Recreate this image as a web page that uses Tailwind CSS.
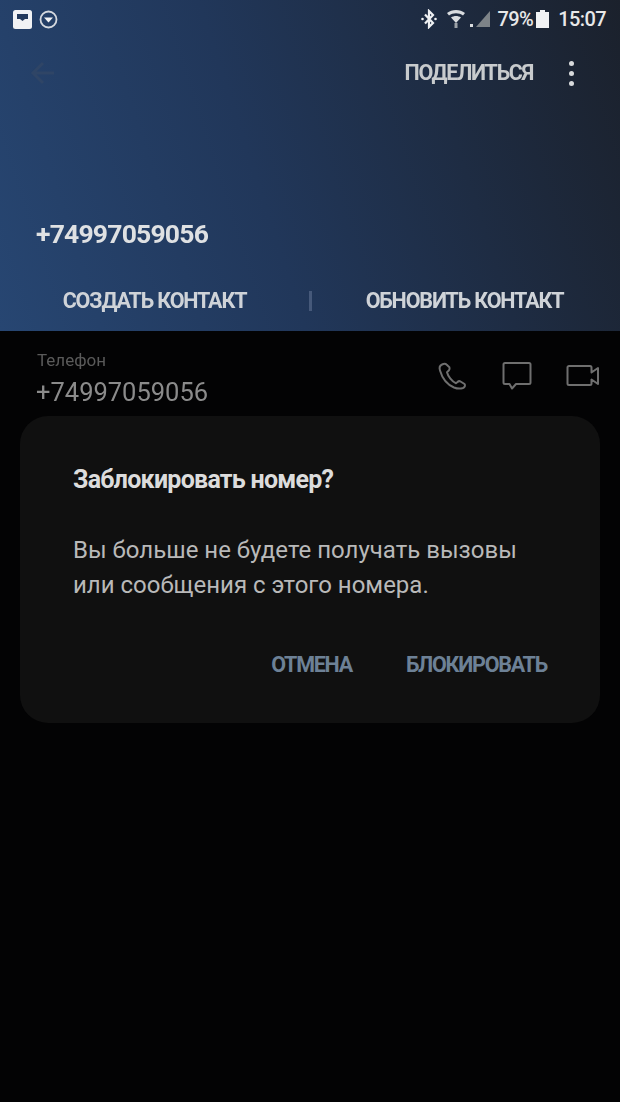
<!DOCTYPE html>
<html lang="ru">
<head>
  <meta charset="UTF-8">
  <meta name="viewport" content="width=device-width, initial-scale=1.0">
  <title>Заблокировать номер</title>
  <script src="https://cdn.jsdelivr.net/npm/@tailwindcss/browser@4"></script>
</head>
<body class="bg-[#030304] font-['Roboto',sans-serif] overflow-hidden">
  <div class="relative w-[620px] h-[1102px] overflow-hidden blur-[0.6px]">
    <!-- Contact header -->
    <header class="h-[331px] flex flex-col bg-[linear-gradient(72deg,#274672_0%,#21375a_42%,#1b212c_100%)]">
      <!-- Status bar -->
      <div class="h-[38px] pl-[13px] pr-[14px] flex items-center justify-between text-[#e8e8e8]">
        <div class="flex items-center gap-[7px]">
          <svg width="19" height="19" viewBox="0 0 19 19"><rect width="19" height="19" rx="2.500" fill="#f1f2f4"/><path d="M4 4h11v5h-3l-2.500 2L7 9H4z" fill="#23395c"/></svg>
          <svg width="19" height="19" viewBox="0 0 19 19"><circle cx="9.500" cy="9.500" r="8" fill="none" stroke="#d5d9df" stroke-width="1.800"/><path d="M5 7.500h9l-4.500 5z" fill="#f1f2f4"/></svg>
        </div>
        <div class="flex items-center text-[20px] leading-none font-medium tracking-[-0.6px]">
          <svg width="18" height="20" viewBox="0 0 18 20" class="mr-[9px]"><path d="M5 5.500l8 8.500-4 4V2l4 4-8 8.500" fill="none" stroke="#eef0f2" stroke-width="2.200"/><circle cx="2.500" cy="10" r="1.300" fill="#eef0f2"/><circle cx="15.500" cy="10" r="1.300" fill="#eef0f2"/></svg>
          <svg width="18" height="20" viewBox="0 0 18 20" class="mr-[5px]"><path d="M0 4C5 0 13 0 18 4l-2 2.500C12 3.500 6 3.500 2 6.500zM4 8.500c3-2 7-2 10 0L9 14z" fill="#d9dcdf"/><path d="M9 14v5" stroke="#9da2a8" stroke-width="3"/></svg>
          <svg width="22" height="18" viewBox="0 0 22 18" class="mr-[6px]"><path d="M20 1v16H6z" fill="#7d8388"/><rect x="0" y="14" width="3" height="3" fill="#d9dcdf"/></svg>
          <span>79%</span>
          <svg width="13" height="18" viewBox="0 0 13 18" class="ml-[3px] mr-[9px]"><path d="M4 0h5v2h4v16H0V2h4z" fill="#f1f2f4"/></svg>
          <span>15:07</span>
        </div>
      </div>
      <!-- Toolbar -->
      <div class="h-[70px] pl-[30px] pr-[46px] flex items-center justify-between">
        <svg width="26" height="26" viewBox="0 0 26 26" fill="none" stroke="#2f4566" stroke-width="3"><path d="M24 13H3M13 3L3 13l10 10"/></svg>
        <div class="flex items-center gap-[36px]">
          <span class="text-[21.500px] font-bold tracking-[-1.3px] text-[#c8cbcd]">ПОДЕЛИТЬСЯ</span>
          <div class="flex flex-col gap-[5px]">
            <span class="w-[5px] h-[5px] rounded-full bg-[#d8dadc]"></span>
            <span class="w-[5px] h-[5px] rounded-full bg-[#d8dadc]"></span>
            <span class="w-[5px] h-[5px] rounded-full bg-[#d8dadc]"></span>
          </div>
        </div>
      </div>
      <div class="mt-[111px] pl-[36px] text-[26.500px] leading-[30px] font-bold tracking-[-0.8px] text-[#dfe1e3]">+74997059056</div>
      <!-- Contact actions -->
      <div class="mt-[32px] h-[40px] flex items-center">
        <span class="w-[309px] text-center text-[21.500px] font-bold tracking-[-1.150px] text-[#cfd3d8]">СОЗДАТЬ КОНТАКТ</span>
        <span class="w-[3px] h-[20px] bg-[#46597a]"></span>
        <span class="flex-1 text-center pr-[3px] text-[21.500px] font-bold tracking-[-1.150px] text-[#cfd3d8]">ОБНОВИТЬ КОНТАКТ</span>
      </div>
    </header>

    <!-- Phone row -->
    <section class="pl-[37px] pr-[20px] pt-[19px] flex justify-between">
      <div>
        <div class="text-[17px] leading-[20px] text-[#5a5a5a]">Телефон</div>
        <div class="mt-[7px] -ml-[1px] text-[25.500px] leading-[30px] text-[#8b8b8b]">+74997059056</div>
      </div>
      <div class="flex items-start text-[#6f6f6f] pt-[11px]">
        <svg width="30" height="30" viewBox="0 0 30 30" fill="none" stroke="currentColor" stroke-width="2"><path d="M5 3.500c-2 1-3 3-2 6 2 7 7 14 14 17 2.500 1 6 1.500 9 .5 2-.8 2.500-3 1.500-4l-4-2.500c-1-.6-2-.5-3 .5l-1.500 1.200c-4-1.500-8-7-9-11l2-2c.8-.8.8-1.800.4-3L9.500 3.500C8.500 2.500 6.500 2.700 5 3.500z"/></svg>
        <svg width="30" height="30" viewBox="0 0 30 30" fill="none" stroke="currentColor" stroke-width="2" stroke-linejoin="round" class="ml-[35px]"><path d="M3 2h24a1.500 1.500 0 0 1 1.500 1.500v18a1.500 1.500 0 0 1-1.500 1.500H14l-4 4.500L7.500 23H3a1.500 1.500 0 0 1-1.500-1.500v-18A1.500 1.500 0 0 1 3 2z"/></svg>
        <svg width="34" height="26" viewBox="0 0 34 26" fill="none" stroke="currentColor" stroke-width="2" stroke-linejoin="round" class="mt-[2px] ml-[34px]"><path d="M3 3h21a1.500 1.500 0 0 1 1.500 1.500v5L32 5v16l-6.500-4.500v4A1.500 1.500 0 0 1 24 22H3a1.500 1.500 0 0 1-1.500-1.500v-16A1.500 1.500 0 0 1 3 3z"/></svg>
      </div>
    </section>

    <!-- Block dialog -->
    <div class="absolute left-[20px] top-[416px] w-[580px] h-[307px] rounded-[28px] bg-[#101010] pl-[53px] pr-[53px] pt-[47px]">
      <h2 class="text-[25px] leading-[34px] font-bold tracking-[-0.750px] text-[#dcdcdc]">Заблокировать номер?</h2>
      <p class="mt-[36px] text-[24px] leading-[35px] text-[#b9b9b9]">Вы больше не будете получать вызовы<br>или сообщения с этого номера.</p>
      <div class="mt-[47px] flex justify-end gap-[54px] text-[21.500px] leading-[30px] font-bold tracking-[-1.250px] text-[#6d8196]">
        <span>ОТМЕНА</span>
        <span>БЛОКИРОВАТЬ</span>
      </div>
    </div>
  </div>
</body>
</html>
